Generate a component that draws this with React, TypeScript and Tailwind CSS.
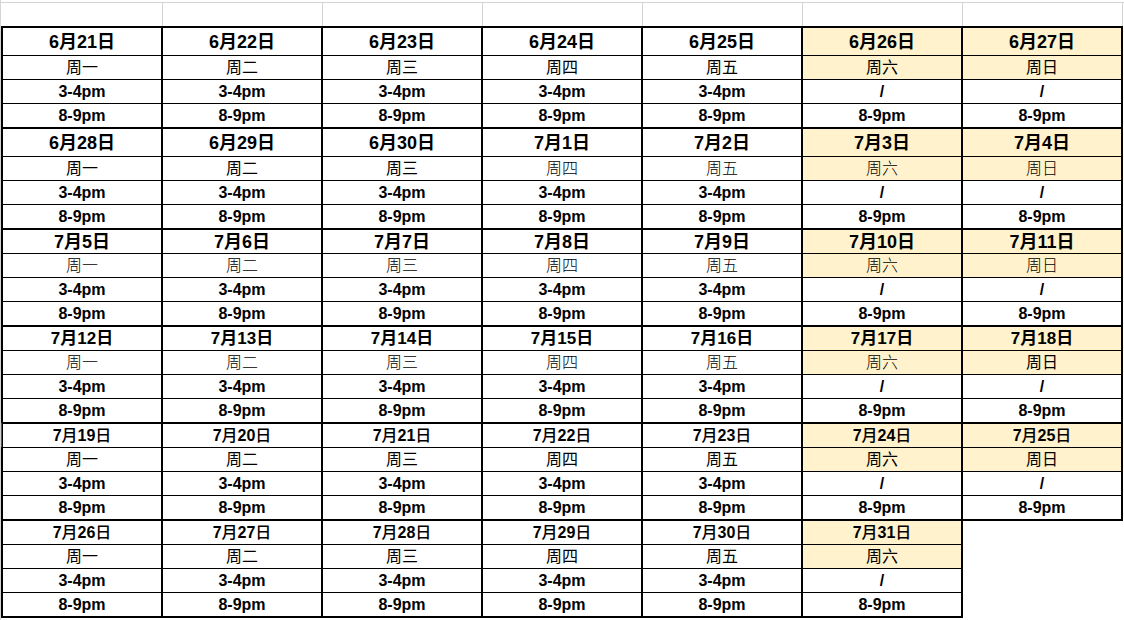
import React from 'react';

const weekdays = ['周一', '周二', '周三', '周四', '周五', '周六', '周日'];

type Block = {
  days: [number, number][];
  tall: boolean;
  dateSize: 'lg' | 'md' | 'sm';
  thin: boolean[];
};

const run = (month: number, from: number, to: number): [number, number][] => {
  const out: [number, number][] = [];
  for (let d = from; d <= to; d++) out.push([month, d]);
  return out;
};

const all = (v: boolean) => [v, v, v, v, v, v, v];

const blocks: Block[] = [
  { days: run(6, 21, 27), tall: true, dateSize: 'lg', thin: all(false) },
  { days: [...run(6, 28, 30), ...run(7, 1, 4)], tall: true, dateSize: 'lg', thin: [false, false, false, true, true, true, true] },
  { days: run(7, 5, 11), tall: false, dateSize: 'lg', thin: all(true) },
  { days: run(7, 12, 18), tall: false, dateSize: 'md', thin: [true, true, true, true, true, true, false] },
  { days: run(7, 19, 25), tall: false, dateSize: 'sm', thin: all(false) },
  { days: run(7, 26, 31), tall: false, dateSize: 'sm', thin: all(false) },
];

const font = { fontFamily: '"Liberation Sans", "Noto Sans CJK SC", sans-serif' };

const DateLabel = ({ m, d, size }: { m: number; d: number; size: Block['dateSize'] }) => {
  if (size === 'sm') {
    return (
      <span className="text-[16px] leading-none">
        <b>{m}</b>
        <span className="font-medium">月</span>
        <b>{d}</b>
        <span className="font-medium">日</span>
      </span>
    );
  }
  return (
    <span className={size === 'lg' ? 'text-[18px] font-bold leading-none' : 'text-[17px] font-bold leading-none'}>
      {m}月{d}日
    </span>
  );
};

const DayCell = ({ block, index, first }: { block: Block; index: number; first: boolean }) => {
  const [m, d] = block.days[index];
  const weekend = index >= 5;
  const bg = weekend ? 'bg-[#fff2cc]' : 'bg-white';
  return (
    <div className={`w-[160px] flex flex-col border-r-2 border-b-2 border-black ${first ? 'border-t-2' : ''}`}>
      <div className={`${block.tall ? 'h-[27px]' : 'h-[23px]'} ${bg} flex items-center justify-center`}>
        <DateLabel m={m} d={d} size={block.dateSize} />
      </div>
      <div className={`h-[24px] border-t border-black ${bg} flex items-center justify-center`}>
        <span className={`text-[16px] leading-none ${block.thin[index] ? 'font-light' : 'font-normal'}`}>{weekdays[index]}</span>
      </div>
      <div className="h-[24px] border-t border-black flex items-center justify-center">
        <span className="text-[16px] font-bold leading-none">{weekend ? '/' : '3-4pm'}</span>
      </div>
      <div className="h-[24px] border-t border-black flex items-center justify-center">
        <span className="text-[16px] font-bold leading-none">8-9pm</span>
      </div>
    </div>
  );
};

export default function App() {
  return (
    <div className="relative min-h-[620px] w-[1124px] overflow-hidden bg-white text-black border-l border-[#d4d4d4]" style={font}>
      <div className="absolute left-[-1px] top-[423px] w-[2px] h-[24px] bg-[#217346]" />

      {/* empty spreadsheet row above the table */}
      <div className="mt-[2px] h-[24px] flex border-t border-[#d4d4d4]">
        <div className="w-[2px]" />
        {weekdays.map((w) => (
          <div key={w} className="w-[160px] border-r border-[#d4d4d4]" />
        ))}
      </div>

      {blocks.map((block, bi) => (
        <div key={bi} className="flex">
          <div className="w-[2px] bg-black" />
          {block.days.map((_, i) => (
            <DayCell key={i} block={block} index={i} first={bi === 0} />
          ))}
        </div>
      ))}
    </div>
  );
}
